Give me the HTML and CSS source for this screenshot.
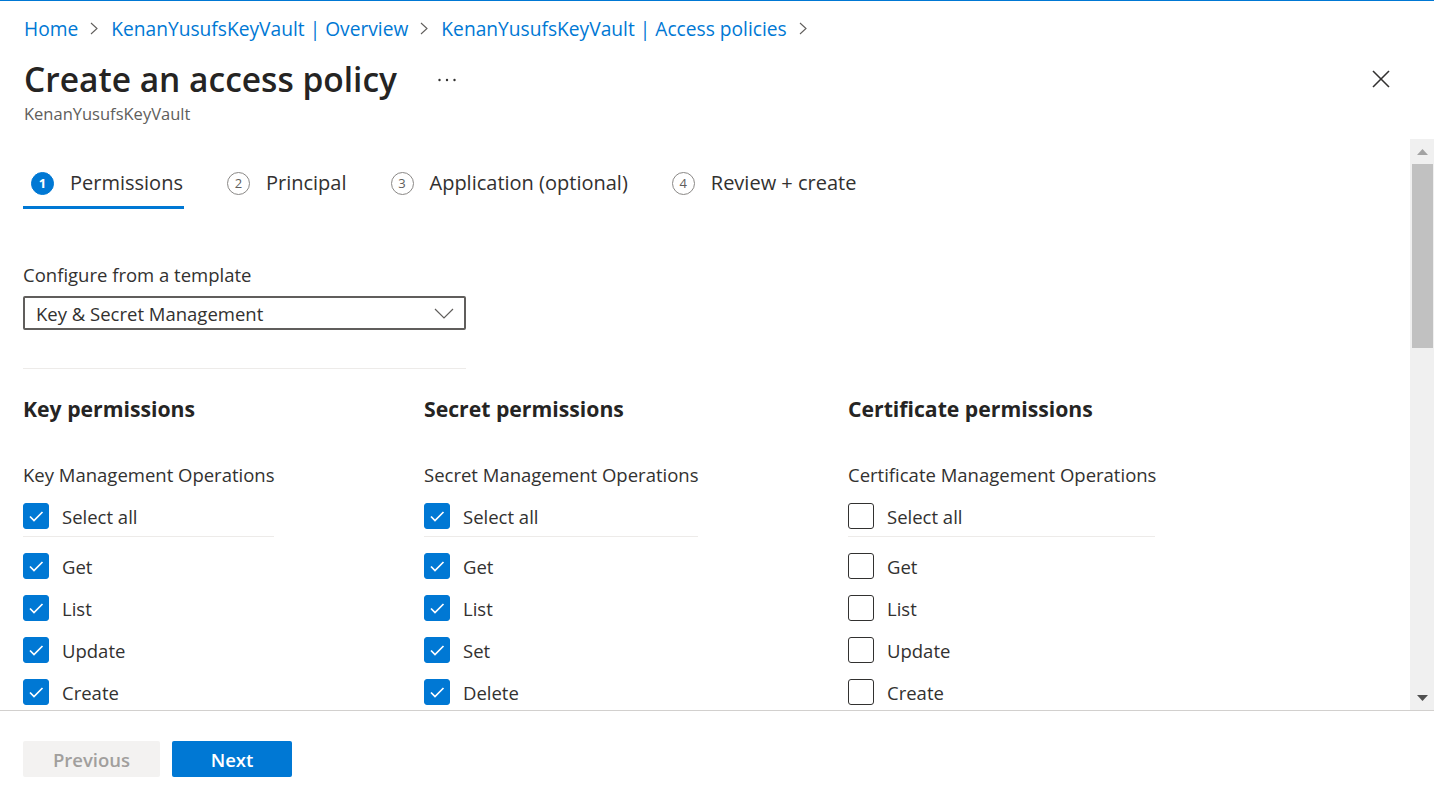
FILE: index.html
```html
<!DOCTYPE html>
<html lang="en">
<head>
<meta charset="utf-8">
<title>Create an access policy</title>
<link rel="stylesheet" href="styles.css">
</head>
<body>
<div class="page">
  <header class="header">
    <nav class="breadcrumb">
      <a class="crumb">Home</a>
      <svg class="crumb-sep" width="8" height="13" viewBox="0 0 8 13"><polyline points="1,1 7,6.5 1,12" fill="none" stroke="#605e5c" stroke-width="1.1"/></svg>
      <a class="crumb">KenanYusufsKeyVault | Overview</a>
      <svg class="crumb-sep" width="8" height="13" viewBox="0 0 8 13"><polyline points="1,1 7,6.5 1,12" fill="none" stroke="#605e5c" stroke-width="1.1"/></svg>
      <a class="crumb">KenanYusufsKeyVault | Access policies</a>
      <svg class="crumb-sep" width="8" height="13" viewBox="0 0 8 13"><polyline points="1,1 7,6.5 1,12" fill="none" stroke="#605e5c" stroke-width="1.1"/></svg>
    </nav>
    <div class="title-row">
      <h1 class="title">Create an access policy</h1>
      <svg class="more" width="20" height="6" viewBox="0 0 20 6"><circle cx="2.5" cy="3" r="1.2" fill="#323130"/><circle cx="10" cy="3" r="1.2" fill="#323130"/><circle cx="17.5" cy="3" r="1.2" fill="#323130"/></svg>
      <div class="spacer"></div>
      <svg class="close" width="18" height="18" viewBox="0 0 18 18"><line x1="1" y1="1" x2="17" y2="17" stroke="#323130" stroke-width="1.6"/><line x1="17" y1="1" x2="1" y2="17" stroke="#323130" stroke-width="1.6"/></svg>
    </div>
    <div class="subtitle">KenanYusufsKeyVault</div>
  </header>

  <main class="scroll-area">
    <div class="content">
      <div class="tabs">
        <div class="tab active"><span class="step">1</span><span class="tab-label">Permissions</span></div>
        <div class="tab"><span class="step">2</span><span class="tab-label">Principal</span></div>
        <div class="tab"><span class="step">3</span><span class="tab-label">Application (optional)</span></div>
        <div class="tab"><span class="step">4</span><span class="tab-label">Review + create</span></div>
      </div>

      <div class="field-label">Configure from a template</div>
      <div class="dropdown">
        <span>Key &amp; Secret Management</span>
        <svg width="20" height="11" viewBox="0 0 20 11"><polyline points="1,1 10,10 19,1" fill="none" stroke="#605e5c" stroke-width="1.2"/></svg>
      </div>
      <div class="divider"></div>

      <div class="perm-grid">
        <section class="perm-col">
          <h2 class="perm-title">Key permissions</h2>
          <div class="ops-title">Key Management Operations</div>
          <label class="cb-row"><span class="cb checked"><svg width="26" height="26" viewBox="0 0 26 26"><polyline points="7,13.5 11,17.5 19.5,9" fill="none" stroke="#fff" stroke-width="1.7"/></svg></span>Select all</label>
          <div class="ops-divider"></div>
          <div class="cb-list">
            <label class="cb-row"><span class="cb checked"><svg width="26" height="26" viewBox="0 0 26 26"><polyline points="7,13.5 11,17.5 19.5,9" fill="none" stroke="#fff" stroke-width="1.7"/></svg></span>Get</label>
            <label class="cb-row"><span class="cb checked"><svg width="26" height="26" viewBox="0 0 26 26"><polyline points="7,13.5 11,17.5 19.5,9" fill="none" stroke="#fff" stroke-width="1.7"/></svg></span>List</label>
            <label class="cb-row"><span class="cb checked"><svg width="26" height="26" viewBox="0 0 26 26"><polyline points="7,13.5 11,17.5 19.5,9" fill="none" stroke="#fff" stroke-width="1.7"/></svg></span>Update</label>
            <label class="cb-row"><span class="cb checked"><svg width="26" height="26" viewBox="0 0 26 26"><polyline points="7,13.5 11,17.5 19.5,9" fill="none" stroke="#fff" stroke-width="1.7"/></svg></span>Create</label>
          </div>
        </section>

        <section class="perm-col">
          <h2 class="perm-title">Secret permissions</h2>
          <div class="ops-title">Secret Management Operations</div>
          <label class="cb-row"><span class="cb checked"><svg width="26" height="26" viewBox="0 0 26 26"><polyline points="7,13.5 11,17.5 19.5,9" fill="none" stroke="#fff" stroke-width="1.7"/></svg></span>Select all</label>
          <div class="ops-divider"></div>
          <div class="cb-list">
            <label class="cb-row"><span class="cb checked"><svg width="26" height="26" viewBox="0 0 26 26"><polyline points="7,13.5 11,17.5 19.5,9" fill="none" stroke="#fff" stroke-width="1.7"/></svg></span>Get</label>
            <label class="cb-row"><span class="cb checked"><svg width="26" height="26" viewBox="0 0 26 26"><polyline points="7,13.5 11,17.5 19.5,9" fill="none" stroke="#fff" stroke-width="1.7"/></svg></span>List</label>
            <label class="cb-row"><span class="cb checked"><svg width="26" height="26" viewBox="0 0 26 26"><polyline points="7,13.5 11,17.5 19.5,9" fill="none" stroke="#fff" stroke-width="1.7"/></svg></span>Set</label>
            <label class="cb-row"><span class="cb checked"><svg width="26" height="26" viewBox="0 0 26 26"><polyline points="7,13.5 11,17.5 19.5,9" fill="none" stroke="#fff" stroke-width="1.7"/></svg></span>Delete</label>
          </div>
        </section>

        <section class="perm-col">
          <h2 class="perm-title">Certificate permissions</h2>
          <div class="ops-title">Certificate Management Operations</div>
          <label class="cb-row"><span class="cb"></span>Select all</label>
          <div class="ops-divider"></div>
          <div class="cb-list">
            <label class="cb-row"><span class="cb"></span>Get</label>
            <label class="cb-row"><span class="cb"></span>List</label>
            <label class="cb-row"><span class="cb"></span>Update</label>
            <label class="cb-row"><span class="cb"></span>Create</label>
          </div>
        </section>
      </div>
    </div>

    <div class="scrollbar">
      <div class="sb-btn"><svg width="11" height="6" viewBox="0 0 11 6"><polygon points="0,6 5.5,0 11,6" fill="#a3a3a3"/></svg></div>
      <div class="sb-track"><div class="sb-thumb"></div></div>
      <div class="sb-btn"><svg width="11" height="6" viewBox="0 0 11 6"><polygon points="0,0 11,0 5.5,6" fill="#505050"/></svg></div>
    </div>
  </main>

  <footer class="footer">
    <button class="btn btn-prev">Previous</button>
    <button class="btn btn-next">Next</button>
  </footer>
</div>
</body>
</html>
```

FILE: styles.css
```css
* { box-sizing: border-box; }

html, body {
  margin: 0;
  padding: 0;
  background: #ffffff;
}

body {
  font-family: "Segoe UI", "Open Sans", "Noto Sans", sans-serif;
  color: #323130;
}

.page {
  width: 1434px;
  height: 803px;
  display: flex;
  flex-direction: column;
  border-top: 1px solid #0078d4;
  overflow: hidden;
}

.header {
  padding: 13px 0 0 24px;
  flex: none;
}

.breadcrumb {
  display: flex;
  align-items: center;
  height: 28px;
  font-size: 19.2px;
}

.crumb {
  color: #0078d4;
  text-decoration: none;
  white-space: nowrap;
}

.crumb-sep {
  margin: 1px 13px 0 12px;
  flex: none;
}

.title-row {
  display: flex;
  align-items: center;
  height: 44px;
  margin-top: 15px;
}

.title {
  margin: 0;
  font-size: 33.5px;
  font-weight: 600;
  line-height: 44px;
  white-space: nowrap;
  color: #252423;
}

.more {
  margin-left: 40px;
  margin-top: 2px;
}

.spacer { flex: 1; }

.close {
  margin-right: 44px;
}

.subtitle {
  margin-top: 2px;
  font-size: 16.5px;
  line-height: 22px;
  color: #605e5c;
}

.scroll-area {
  margin-top: 14px;
  flex: 1;
  display: flex;
  min-height: 0;
}

.content {
  flex: 1;
  overflow: hidden;
  padding: 30px 0 0 23px;
}

.tabs {
  display: flex;
  gap: 35px;
}

.tab {
  display: flex;
  align-items: center;
  gap: 16px;
  padding: 0 1px 9px 8px;
  border-bottom: 3px solid transparent;
  height: 40px;
}

.tab.active {
  border-bottom-color: #0078d4;
}

.step {
  width: 23px;
  height: 23px;
  border-radius: 50%;
  border: 1px solid #8a8886;
  display: flex;
  align-items: center;
  justify-content: center;
  font-size: 13px;
  color: #605e5c;
  line-height: 1;
}

.tab.active .step {
  background: #0078d4;
  border-color: #0078d4;
  color: #ffffff;
  font-weight: 700;
}

.tab-label {
  font-size: 20px;
  line-height: 28px;
  white-space: nowrap;
}

.field-label {
  margin-top: 54px;
  font-size: 18.5px;
  line-height: 24px;
}

.dropdown {
  margin-top: 9px;
  width: 443px;
  height: 34px;
  border: 2px solid #605e5c;
  border-radius: 2px;
  display: flex;
  align-items: center;
  justify-content: space-between;
  padding: 0 10px 0 11px;
  font-size: 18.5px;
}

.divider {
  margin-top: 38px;
  width: 443px;
  height: 1px;
  background: #edebe9;
}

.perm-grid {
  margin-top: 26px;
  display: grid;
  grid-template-columns: 251px 274px 307px;
  column-gap: 150px;
}

.perm-title {
  margin: 0;
  font-size: 21.2px;
  font-weight: 700;
  line-height: 28px;
  white-space: nowrap;
  color: #252423;
}

.ops-title {
  margin-top: 40px;
  font-size: 18.5px;
  line-height: 24px;
  white-space: nowrap;
}

.cb-row {
  display: flex;
  align-items: center;
  height: 26px;
  font-size: 18.5px;
  gap: 13px;
  white-space: nowrap;
}

.perm-col > .cb-row {
  margin-top: 16px;
}

.cb {
  flex: none;
  width: 26px;
  height: 26px;
  border: 1px solid #323130;
  border-radius: 3px;
  background: #ffffff;
  display: flex;
}

.cb.checked {
  background: #0078d4;
  border-color: #0078d4;
}

.cb svg {
  margin: -1px;
}

.ops-divider {
  margin-top: 7px;
  height: 1px;
  background: #edebe9;
}

.cb-list {
  margin-top: 16px;
  display: flex;
  flex-direction: column;
  gap: 16px;
}

.scrollbar {
  flex: none;
  width: 24px;
  background: #f0f0f0;
  display: flex;
  flex-direction: column;
}

.sb-btn {
  height: 25px;
  display: flex;
  align-items: center;
  justify-content: center;
  padding-left: 1px;
}

.sb-track {
  flex: 1;
  padding: 0 1px 0 2px;
}

.sb-thumb {
  height: 184px;
  background: #c1c1c1;
}

.footer {
  flex: none;
  height: 93px;
  border-top: 1px solid #d2d0ce;
  padding: 30px 0 0 23px;
  display: flex;
  align-items: flex-start;
  gap: 12px;
}

.btn {
  height: 36px;
  border: none;
  border-radius: 2px;
  font-family: inherit;
  font-size: 18.5px;
  font-weight: 600;
  padding: 0;
}

.btn-prev {
  width: 137px;
  background: #f3f2f1;
  color: #a19f9d;
}

.btn-next {
  width: 120px;
  background: #0078d4;
  color: #ffffff;
}
```
